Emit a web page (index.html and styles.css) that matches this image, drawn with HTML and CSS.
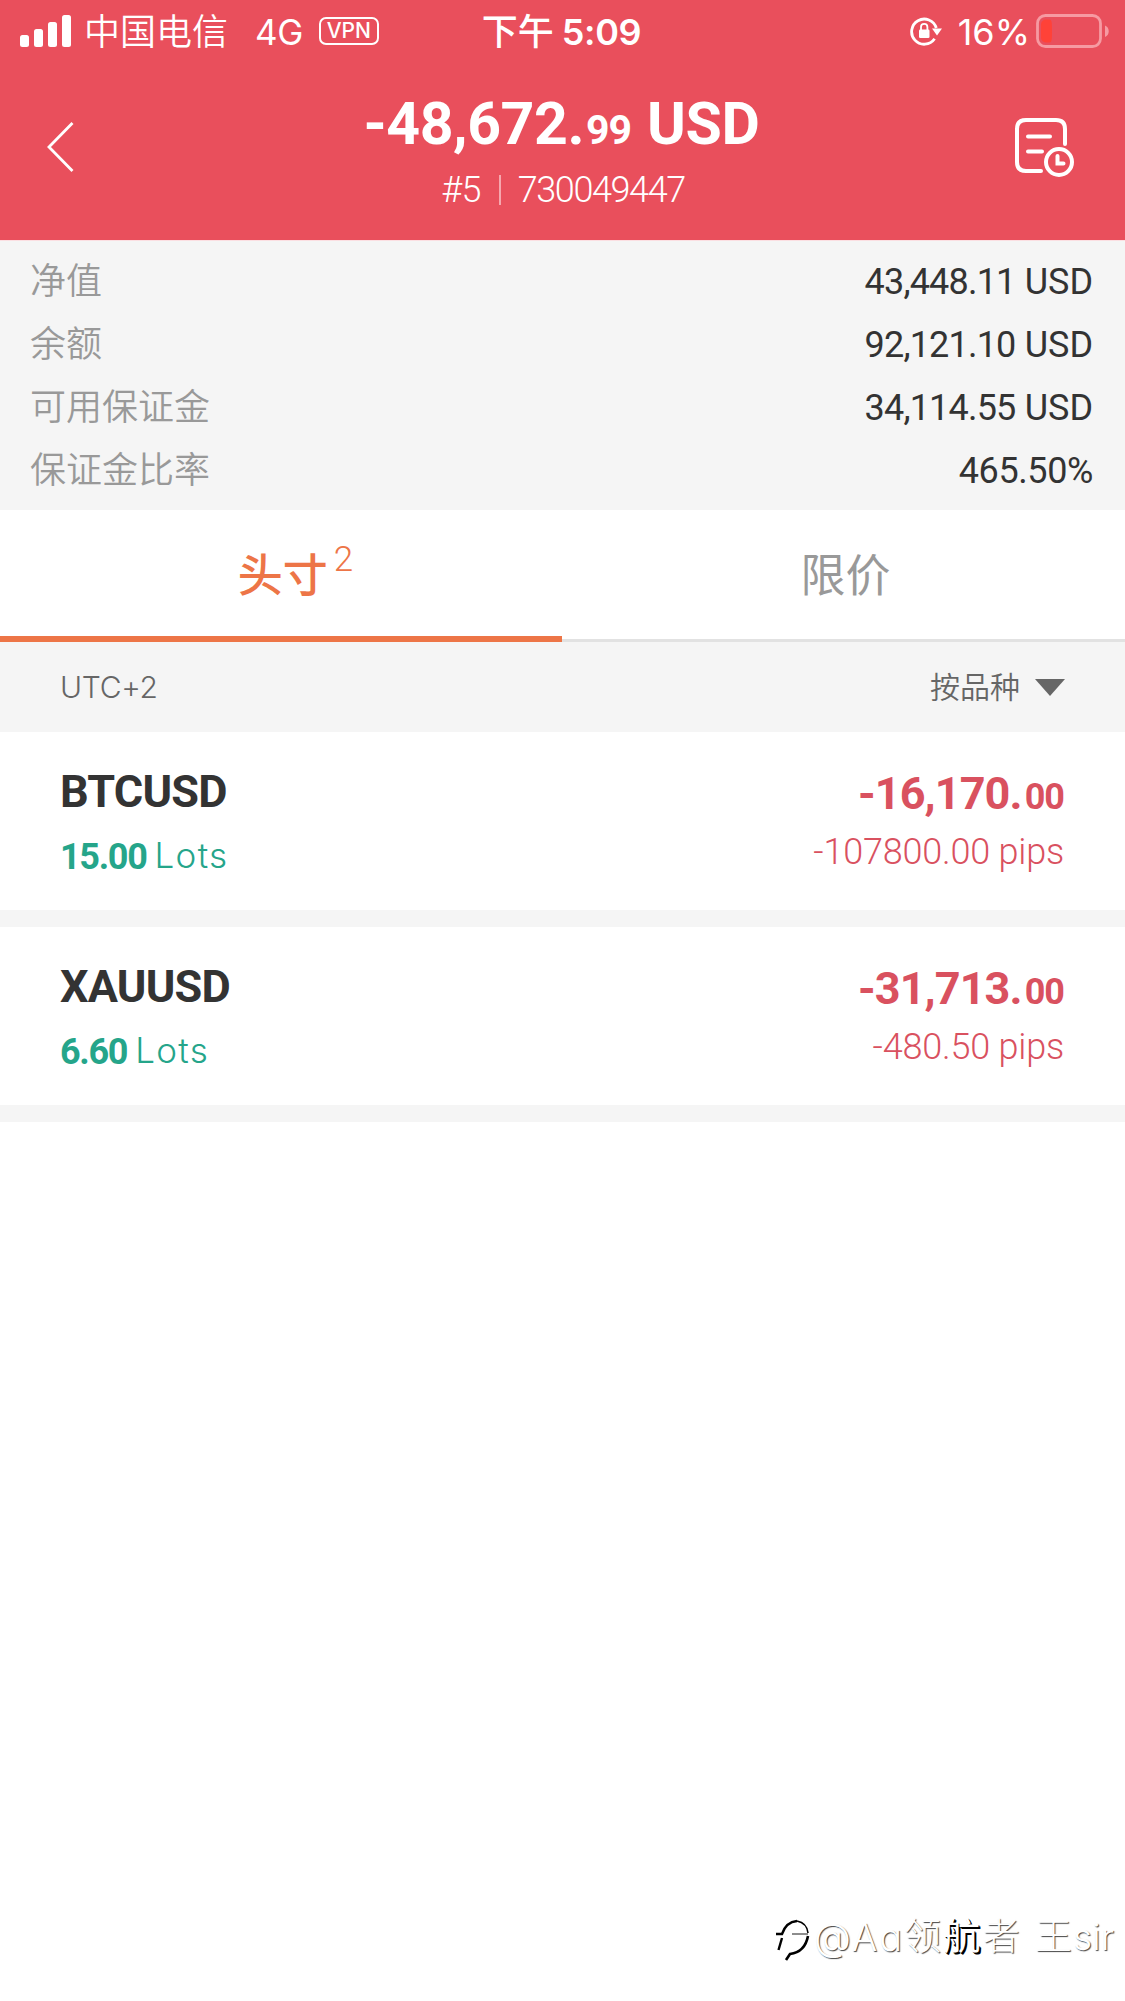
FILE: index.html
```html
<!DOCTYPE html>
<html lang="zh-CN">
<head>
<meta charset="utf-8">
<title>头寸</title>
<link rel="stylesheet" href="styles.css">
</head>
<body>
<div class="app">
  <header class="header">
    <div class="status">
      <div class="status-left">
        <svg class="signal" width="52" height="32" viewBox="0 0 52 32" fill="#fff"><rect x="0" y="20" width="9" height="12" rx="2.5"/><rect x="14" y="14" width="9" height="18" rx="2.5"/><rect x="28" y="7" width="9" height="25" rx="2.5"/><rect x="42" y="0" width="9" height="32" rx="2.5"/></svg>
        <span class="carrier">中国电信</span>
        <span class="network">4G</span>
        <span class="vpn">VPN</span>
      </div>
      <div class="status-time"><span>下午</span><span class="clock">5:09</span></div>
      <div class="status-right">
        <svg class="lock" width="32" height="30" viewBox="0 0 32 30"><path d="M24.6 21.8A12.6 12.6 0 1 1 26.3 11" fill="none" stroke="#fff" stroke-width="2.8"/><path d="M22 11.5h10l-5 7z" fill="#fff"/><rect x="9" y="12.500" width="10.500" height="8.500" rx="1.300" fill="#fff"/><path d="M11 13v-3a3.200 3.200 0 0 1 6.400 0v3" fill="none" stroke="#fff" stroke-width="1.800"/></svg>
        <span class="percent">16%</span>
        <svg class="battery" width="74" height="34" viewBox="0 0 74 34"><rect x="1.500" y="1.500" width="63" height="31" rx="8" fill="none" stroke="#f69aa2" stroke-width="2.800"/><path d="M13 5.500H10a5 5 0 0 0-5 5v13a5 5 0 0 0 5 5h3c3 0 3-3 3-11.500s0-11.500-3-11.500z" fill="#ff4238"/><path d="M69 11.500c5 2 5 9.500 0 11.500z" fill="#f69aa2"/></svg>
      </div>
    </div>
    <div class="titlebar">
      <svg class="back" width="28" height="52" viewBox="0 0 28 52"><path d="M26.500 2 3 26 26.500 50" fill="none" stroke="#fff" stroke-width="2.800"/></svg>
      <div class="heading">
        <h1 class="balance"><span class="whole">-48,672.</span><span class="cents">99</span><span class="unit">USD</span></h1>
        <div class="account"><span class="rank">#5</span><i class="divider"></i><span class="number">730049447</span></div>
      </div>
      <svg class="history" width="60" height="60" viewBox="0 0 60 60" fill="none" stroke="#fff" stroke-width="4" stroke-linecap="round"><path d="M27 54H12Q3 54 3 45V12Q3 3 12 3H42Q51 3 51 12V27"/><path d="M14 19.500H36M14 34.500H28"/><circle cx="45" cy="45" r="13"/><path d="M43.500 39V46.500H49.500"/></svg>
    </div>
  </header>

  <section class="summary">
    <div class="summary-row"><span class="label">净值</span><span class="value">43,448.11 <span class="currency">USD</span></span></div>
    <div class="summary-row"><span class="label">余额</span><span class="value">92,121.10 <span class="currency">USD</span></span></div>
    <div class="summary-row"><span class="label">可用保证金</span><span class="value">34,114.55 <span class="currency">USD</span></span></div>
    <div class="summary-row"><span class="label">保证金比率</span><span class="value ratio">465.50%</span></div>
  </section>

  <nav class="tabs">
    <div class="tab active"><span>头寸</span><sup class="count">2</sup></div>
    <div class="tab"><span>限价</span></div>
  </nav>

  <div class="filter">
    <span class="zone">UTC+2</span>
    <span class="sort"><span class="sort-name">按品种</span><svg width="30" height="17" viewBox="0 0 30 17"><path d="M0 0H30L15 17z" fill="#666"/></svg></span>
  </div>

  <main class="positions">
    <article class="position">
      <div class="side">
        <div class="symbol">BTCUSD</div>
        <div class="lots"><b>15.00</b><span>Lots</span></div>
      </div>
      <div class="side end">
        <div class="profit"><span class="p-whole">-16,170.</span><span class="p-cents">00</span></div>
        <div class="pips">-107800.00 pips</div>
      </div>
    </article>
    <article class="position">
      <div class="side">
        <div class="symbol">XAUUSD</div>
        <div class="lots"><b>6.60</b><span>Lots</span></div>
      </div>
      <div class="side end">
        <div class="profit"><span class="p-whole">-31,713.</span><span class="p-cents">00</span></div>
        <div class="pips">-480.50 pips</div>
      </div>
    </article>
  </main>

  <footer class="watermark">
    <svg class="mark" width="34" height="44" viewBox="0 0 34 44" fill="none" stroke="#000"><path d="M0 16H6Q10 4 21 3" stroke-width="2.400"/><path d="M6 20 2.500 32" stroke-width="2.400"/><path d="M21 3Q31 5 32 15" stroke-width="1.600"/><path d="M32 18Q29 34 14 36L10 42" stroke-width="2.600"/><path d="M16 16H32" stroke-width="0.900"/></svg>
    <span class="handle">@Aa</span><span class="name">领<b>航</b>者</span><span class="surname">王</span><span class="sir">sir</span>
  </footer>
</div>
</body>
</html>
```
FILE: styles.css
```css
* { box-sizing: border-box; margin: 0; padding: 0; }
svg { display: block; flex: none; }
body { background: #fff; }
.app {
  width: 1125px;
  height: 2001px;
  display: flex;
  flex-direction: column;
  overflow: hidden;
  background: #fff;
  font-family: Roboto, "Noto Sans CJK SC", sans-serif;
  color: #333;
  white-space: nowrap;
}

.header { height: 240px; background: #e94f5c; color: #fff; }
.status {
  height: 62px;
  padding: 0 15px 0 20px;
  display: grid;
  grid-template-columns: 1fr auto 1fr;
  align-items: center;
  font: 36px/62px Inter, "Noto Sans CJK SC", sans-serif;
}
.status-left, .status-right, .status-time { display: flex; align-items: center; }
.status-right { justify-content: flex-end; }
.signal { margin-top: -2px; }
.carrier { margin-left: 12px; padding-top: 1px; font-weight: 350; }
.network { margin-left: 27px; padding-top: 1px; letter-spacing: -0.5px; font-size: 35px; }
.vpn {
  width: 60px;
  height: 28px;
  margin: -2px 0 0 16px;
  border: 2px solid #fff;
  border-radius: 7px;
  font-size: 21px;
  line-height: 24px;
  font-weight: 500;
  text-align: center;
}
.status-time { font-weight: 500; margin-right: 7px; padding-top: 1px; }
.clock { margin-left: 8px; font-weight: 600; letter-spacing: -0.4px; }
.lock { margin-right: 16px; }
.percent { margin-right: 6px; padding-top: 1px; }
.battery { margin-top: -2px; }

.titlebar { height: 178px; padding: 0 51px 0 46px; display: flex; justify-content: space-between; }
.back { margin-top: 59px; }
.history { margin-top: 55px; }
.heading { display: flex; flex-direction: column; align-items: center; padding-left: 35px; }
.balance { display: flex; align-items: baseline; height: 90px; line-height: 124px; font-size: 59px; font-weight: 700; }
.whole { letter-spacing: -0.45px; }
.cents { font-size: 41px; margin-left: 2px; letter-spacing: -1px; }
.unit { margin-left: 16px; letter-spacing: -0.4px; }
.account { display: flex; align-items: center; margin-left: 3px; font-size: 36px; line-height: 76px; font-weight: 300; }
.rank { letter-spacing: -0.7px; }
.number { letter-spacing: -1.4px; }
.divider { width: 2px; height: 30px; margin: 0 17px 0 18px; background: #f6a7ae; }

.summary { height: 270px; padding: 9px 32px 0 30px; background: #f5f5f5; border-top: 1px solid #fbdfe2; }
.summary-row { height: 63px; display: flex; justify-content: space-between; align-items: center; line-height: 63px; }
.label { font-size: 36px; font-weight: 350; color: #999; padding-top: 1px; }
.value { font-size: 36px; font-weight: 400; letter-spacing: -0.8px; padding-top: 2px; }
.currency { margin-left: 1px; letter-spacing: 0; }
.ratio { letter-spacing: -0.4px; }

.tabs { height: 132px; display: grid; grid-template-columns: 562px 1fr; }
.tab {
  display: flex;
  justify-content: center;
  padding: 37px 0 0 4px;
  border-bottom: 3px solid #e2e2e2;
  font-size: 45px;
  line-height: 60px;
  color: #999;
}
.active { border-bottom: 6px solid #ed7547; color: #ed7547; font-weight: 500; padding-left: 29px; }
.count { margin: -17px 0 0 6px; font-size: 35px; font-weight: 300; line-height: 60px; }

.filter {
  height: 90px;
  padding: 0 60px;
  display: flex;
  justify-content: space-between;
  background: #f5f5f5;
  color: #666;
  line-height: 90px;
  font-size: 30px;
}
.zone { font-family: Inter, sans-serif; font-weight: 300; letter-spacing: -0.3px; }
.sort { display: flex; align-items: center; gap: 15px; }
.sort-name { padding-top: 2px; font-weight: 350; }

.position {
  height: 195px;
  padding: 0 61px 0 60px;
  display: flex;
  justify-content: space-between;
  border-bottom: 17px solid #f5f5f5;
}
.side { display: flex; flex-direction: column; }
.end { align-items: flex-end; color: #d9515f; }
.symbol { height: 90px; font-size: 45px; line-height: 120px; font-weight: 700; letter-spacing: -0.8px; }
.lots { display: flex; font-size: 36px; line-height: 70px; color: #25a58a; }
.lots b { letter-spacing: -1.3px; }
.lots span { margin-left: 8px; font: 300 35px/67px Inter, sans-serif; letter-spacing: 1.3px; }
.profit { display: flex; align-items: baseline; height: 90px; line-height: 124px; font-size: 45px; font-weight: 700; }
.p-whole { letter-spacing: -0.9px; }
.p-cents { font-size: 36px; margin-left: 3px; letter-spacing: -1px; }
.pips { font-size: 36px; line-height: 60px; font-weight: 300; letter-spacing: -0.2px; }

.watermark {
  margin-top: auto;
  height: 128px;
  padding-right: 11px;
  display: flex;
  align-items: center;
  justify-content: flex-end;
  font: 300 37px/128px Inter, "Noto Sans CJK SC", sans-serif;
  color: #fff;
  text-shadow: 1px 1px 1px #444;
}
.watermark b { font-weight: 400; text-shadow: 1px 1px 0 #000, 2px 2px 0 #000; }
.mark { margin: 6px 4px 0 0; }
.handle { font-size: 38px; font-feature-settings: "cv11"; letter-spacing: 2px; }
.name { letter-spacing: 2.300px; }
.surname { margin-left: 13px; letter-spacing: 1px; }
```
